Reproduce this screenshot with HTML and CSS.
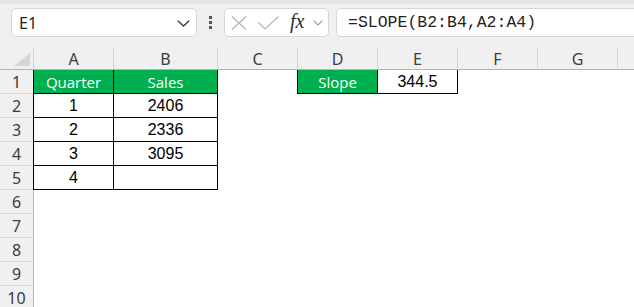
FILE: index.html
```html
<!DOCTYPE html>
<html>
<head>
<meta charset="utf-8">
<link rel="stylesheet" href="styles.css">
</head>
<body>
<div class="app">
  <div class="topstrip"></div>
  <div class="fbar">
    <div class="namebox">
      <span class="nametext">E1</span>
      <svg class="chev" width="13" height="7" viewBox="0 0 13 7"><polyline points="0.8,0.8 6.5,6 12.2,0.8" fill="none" stroke="#3a3a3a" stroke-width="1.4"/></svg>
    </div>
    <div class="dots"><i></i><i></i><i></i></div>
    <div class="fxbox">
      <svg class="xic" width="16" height="14" viewBox="0 0 16 14"><path d="M1 0.5 L15 13.5 M15 0.5 L1 13.5" stroke="#b4b4b4" stroke-width="1.2" fill="none"/></svg>
      <svg class="okic" width="21" height="14" viewBox="0 0 21 14"><polyline points="0.5,6.5 7,13 20.5,0.5" stroke="#b4b4b4" stroke-width="1.2" fill="none"/></svg>
      <span class="fx">fx</span>
      <svg class="chev2" width="10" height="6" viewBox="0 0 10 6"><polyline points="0.6,0.6 5,5 9.4,0.6" fill="none" stroke="#9a9a9a" stroke-width="1.1"/></svg>
    </div>
    <div class="finput">=SLOPE(B2:B4,A2:A4)</div>
  </div>
  <div class="sheet">
    <div class="corner"><svg width="16" height="13" viewBox="0 0 16 13"><polygon points="16,0 16,13 0,13" fill="#d6d6d6"/></svg></div>
    <div class="ch">A</div><div class="ch">B</div><div class="ch">C</div><div class="ch">D</div><div class="ch">E</div><div class="ch">F</div><div class="ch">G</div><div class="ch last"></div>

    <div class="rh">1</div>
    <div class="c green t left">Quarter</div><div class="c green t">Sales</div><div class="c"></div><div class="c green t left">Slope</div><div class="c b n">344.5</div><div class="c"></div><div class="c"></div><div class="c"></div>

    <div class="rh">2</div>
    <div class="c b n left">1</div><div class="c b n">2406</div><div class="c"></div><div class="c"></div><div class="c"></div><div class="c"></div><div class="c"></div><div class="c"></div>

    <div class="rh">3</div>
    <div class="c b n left">2</div><div class="c b n">2336</div><div class="c"></div><div class="c"></div><div class="c"></div><div class="c"></div><div class="c"></div><div class="c"></div>

    <div class="rh">4</div>
    <div class="c b n left">3</div><div class="c b n">3095</div><div class="c"></div><div class="c"></div><div class="c"></div><div class="c"></div><div class="c"></div><div class="c"></div>

    <div class="rh">5</div>
    <div class="c b n left">4</div><div class="c b n"></div><div class="c"></div><div class="c"></div><div class="c"></div><div class="c"></div><div class="c"></div><div class="c"></div>

    <div class="rh">6</div>
    <div class="c"></div><div class="c"></div><div class="c"></div><div class="c"></div><div class="c"></div><div class="c"></div><div class="c"></div><div class="c"></div>
    <div class="rh">7</div>
    <div class="c"></div><div class="c"></div><div class="c"></div><div class="c"></div><div class="c"></div><div class="c"></div><div class="c"></div><div class="c"></div>
    <div class="rh">8</div>
    <div class="c"></div><div class="c"></div><div class="c"></div><div class="c"></div><div class="c"></div><div class="c"></div><div class="c"></div><div class="c"></div>
    <div class="rh">9</div>
    <div class="c"></div><div class="c"></div><div class="c"></div><div class="c"></div><div class="c"></div><div class="c"></div><div class="c"></div><div class="c"></div>
    <div class="rh">10</div>
    <div class="c"></div><div class="c"></div><div class="c"></div><div class="c"></div><div class="c"></div><div class="c"></div><div class="c"></div><div class="c"></div>
  </div>
</div>
</body>
</html>
```

FILE: styles.css
```css
html, body {
  margin: 0;
  padding: 0;
  width: 634px;
  height: 307px;
  overflow: hidden;
  background: #f0f0f0;
}
.app {
  width: 634px;
  height: 307px;
  overflow: hidden;
  font-family: "Noto Sans", "Open Sans", sans-serif;
  color: #222;
}
.topstrip {
  height: 4px;
  background: #e6e6e6;
}
.fbar {
  display: flex;
  align-items: center;
  padding: 4px 0 0 11px;
  height: 29px;
  margin-bottom: 11px;
}
.namebox {
  box-sizing: border-box;
  width: 186px;
  height: 29px;
  background: #fff;
  border: 1px solid #d6d6d6;
  border-radius: 5px;
  display: flex;
  align-items: center;
  justify-content: space-between;
  padding: 0 6px 0 7px;
}
.nametext {
  font-size: 16px;
  color: #1f1f1f;
}
.chev { margin-top: 1px; }
.dots {
  width: 27px;
  display: flex;
  flex-direction: column;
  align-items: center;
  gap: 2px;
}
.dots i {
  display: block;
  width: 3px;
  height: 3px;
  background: #555;
}
.fxbox {
  box-sizing: border-box;
  width: 105px;
  height: 29px;
  background: #fff;
  border: 1px solid #d6d6d6;
  border-radius: 5px;
  display: flex;
  align-items: center;
  padding-left: 6px;
}
.okic { margin-left: 11px; }
.fx {
  font-family: "Liberation Serif", "DejaVu Serif", serif;
  font-style: italic;
  font-weight: normal;
  font-size: 20px;
  color: #2b2b2b;
  margin-left: 11px;
  line-height: 1;
  margin-top: -3px;
}
.chev2 { margin-left: 9px; margin-top: 1px; }
.finput {
  box-sizing: border-box;
  flex: 1;
  height: 29px;
  margin-left: 7px;
  margin-right: -10px;
  background: #fff;
  border: 1px solid #d6d6d6;
  border-radius: 5px;
  font-family: "Liberation Mono", monospace;
  font-size: 16.5px;
  color: #1f1f1f;
  display: flex;
  align-items: center;
  padding-left: 11px;
}
.sheet {
  display: grid;
  grid-template-columns: 34px 80px 104px 80px 80px 80px 80px 80px 20px;
  grid-template-rows: 22px;
  grid-auto-rows: 24px;
}
.corner {
  box-sizing: border-box;
  border-right: 1px solid #cfcfcf;
  border-bottom: 1px solid #b4b4b4;
  display: flex;
  align-items: flex-end;
  justify-content: flex-end;
  padding: 0 3px 3px 0;
}
.ch {
  box-sizing: border-box;
  border-right: 1px solid #d4d4d4;
  border-bottom: 1px solid #b4b4b4;
  display: flex;
  align-items: center;
  justify-content: center;
  font-size: 16px;
  color: #3c3c3c;
}
.ch.last { border-right: none; }
.rh {
  box-sizing: border-box;
  border-right: 1px solid #bdbdbd;
  border-bottom: 1px solid #dadada;
  display: flex;
  align-items: center;
  justify-content: center;
  font-size: 16px;
  color: #3c3c3c;
}
.c {
  box-sizing: border-box;
  background: #fff;
  display: flex;
  align-items: center;
  justify-content: center;
}
.c.b {
  border-right: 1px solid #000;
  border-bottom: 1px solid #000;
}
.c.green {
  background: #00b050;
  border-right: 1px solid #000;
  border-bottom: 1px solid #000;
}
.c.left {
  box-shadow: -1px 0 0 #000;
}
.t {
  font-family: "Open Sans", "Noto Sans", sans-serif;
  font-size: 15px;
  color: #fff;
}
.n {
  font-family: "Liberation Sans", Arial, sans-serif;
  font-size: 16px;
  color: #000;
}
```
